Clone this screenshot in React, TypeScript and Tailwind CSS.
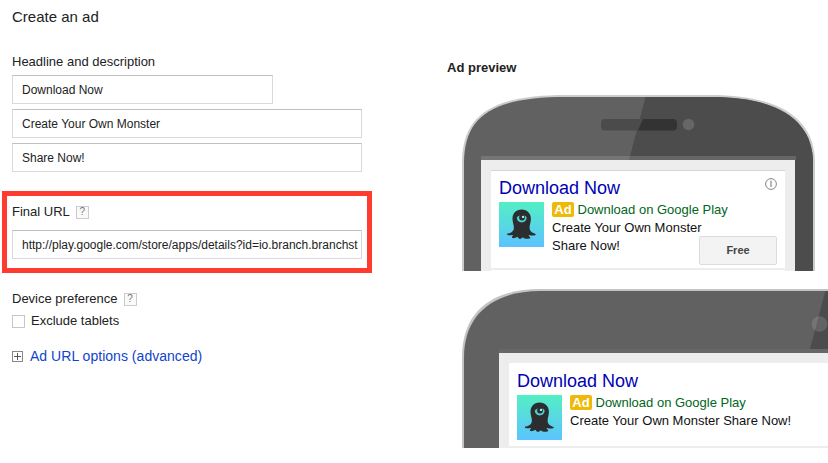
import type { ReactNode } from "react";

function Field({ children, className }: { children: ReactNode; className: string }) {
  return (
    <div
      className={`flex h-[29px] items-center border border-[#d9d9d9] border-t-[#c0c0c0] bg-white px-[9px] text-[12px] text-[#222] ${className}`}
    >
      <div className="w-full whitespace-nowrap">{children}</div>
    </div>
  );
}

function Help() {
  return (
    <span className="flex h-[13px] w-[13px] items-center justify-center border border-[#ccc] bg-[#fafafa] text-[10px] leading-none text-[#777]">
      ?
    </span>
  );
}

function Monster() {
  return (
    <svg width="45" height="45" viewBox="0 0 45 45" className="shrink-0">
      <defs>
        <linearGradient id="sky" x1="0" y1="0" x2="0" y2="1">
          <stop offset="0" stopColor="#53efc4" />
          <stop offset="1" stopColor="#5cc3ff" />
        </linearGradient>
      </defs>
      <rect width="45" height="45" fill="url(#sky)" />
      <path
        d="M22.6 7.500C17 7.500 13.300 11.600 13.500 17.200C13.600 20.500 15 23 14.900 26C14.700 29.500 11.500 31.300 8.300 31.600C7.400 32.300 8 33.200 9.200 33.300C11.200 33.500 13 33.200 14.200 32.900C13.600 33.800 12.800 34.700 12.900 35.600C13.600 36.900 16.600 36.100 18.500 34.800C19 36.400 20.400 37.100 21.700 36.700C22.800 36.400 23.100 35.700 23.700 35.200C25.200 36.600 27.800 37.200 30.400 36.500C31.900 36 31.300 35 30.200 34.200C29.600 33.700 29.600 33.200 30 32.900C31.800 33.600 34.700 34 36.500 33C37.400 32.200 36 31.700 34.800 31.200C31.800 30 30.600 28.200 30.600 25.400C30.600 22.600 31.900 20.300 31.900 16.700C31.900 11.600 28.200 7.500 22.600 7.500Z"
        fill="#2b2d2f"
      />
      <path d="M17.800 15.800C18.800 12.500 26.600 12.300 27.600 15.500C27.500 22 18 22 17.800 15.800Z" fill="#4fd0cf" />
      <circle cx="23" cy="15.600" r="2.900" fill="#2b2d2f" />
      <circle cx="24" cy="14.900" r="1.200" fill="#a5efe8" />
    </svg>
  );
}

function InfoIcon() {
  return (
    <svg width="12" height="12" viewBox="0 0 12 12">
      <circle cx="6" cy="6" r="5.4" fill="none" stroke="#777" strokeWidth="0.9" />
      <path d="M6 2.500V9" stroke="#8c8580" strokeWidth="1.200" />
    </svg>
  );
}

function AdText({ children }: { children: ReactNode }) {
  return (
    <div className="flex gap-2">
      <Monster />
      <div className="text-[13px] leading-[18px] text-[#111] whitespace-nowrap">
        <div className="flex h-[17px] items-start gap-1">
          <span className="flex h-[15px] w-[22px] items-center justify-center rounded-[2px] bg-[#efb90a] text-[13px] font-bold text-white">
            Ad
          </span>
          <span className="-ml-[0.5px] leading-[16px] text-[#006621]">Download on Google Play</span>
        </div>
        {children}
      </div>
    </div>
  );
}

function PhoneFrame() {
  return (
    <svg width="354" height="176" viewBox="0 0 354 176" className="[grid-area:1/1]">
      <defs>
        <clipPath id="phoneBody">
          <path d="M2 176V68C2 20 32 2 104 2H249C320 2 351 28 351 68V176Z" />
        </clipPath>
      </defs>
      <path d="M0 176V68C0 19 31 0 104 0H249C321 0 353 26 353 68V176Z" fill="#cbcdcc" />
      <g clipPath="url(#phoneBody)">
        <rect width="354" height="176" fill="#616161" />
        <path d="M184 0H354V176H150L167 65Z" fill="#4c4c4c" />
      </g>
      <rect x="139" y="24" width="76" height="11.500" rx="4" fill="#4b4b4b" />
      <path d="M181 24H211Q215 24 215 28V31.500Q215 35.500 211 35.500H176Z" fill="#333" />
      <circle cx="226.500" cy="29.500" r="5.800" fill="#666" />
      <path d="M19 61H334V65H19Z" fill="#757575" />
      <path d="M168 61H334V65H167Z" fill="#666" />
    </svg>
  );
}

function TabletFrame() {
  return (
    <svg width="366" height="159" viewBox="0 0 366 159" className="[grid-area:1/1]">
      <path d="M0 159V68C0 22 31 0 78 0H366V159Z" fill="#c3c5c4" />
      <path d="M2 159V68C2 25 32 2 78 2H366V159H2Z" fill="#616161" />
      <path d="M363.300 2H366V60H348Z" fill="#4c4c4c" />
      <circle cx="357.500" cy="35" r="7.800" fill="#fff" fillOpacity="0.130" />
      <rect x="37" y="60" width="329" height="4" fill="#676767" />
    </svg>
  );
}

export default function App() {
  return (
    <div className="flex h-[463px] w-[828px] overflow-hidden bg-white font-['Liberation_Sans',Arial,sans-serif] text-[13px] text-[#222]">
      <section className="w-[447px] shrink-0">
        <h1 className="mt-2 ml-3 text-[15px] leading-[18px]">Create an ad</h1>
        <h2 className="mt-7 ml-3 text-[13px] leading-4">Headline and description</h2>
        <div className="mt-[5px] ml-3 flex flex-col gap-[5px]">
          <Field className="w-[261px]">Download Now</Field>
          <Field className="w-[350px]">Create Your Own Monster</Field>
          <Field className="w-[350px]">Share Now!</Field>
        </div>
        <div className="mt-[19px] ml-[2px] h-[82px] w-[370px] border-[5px] border-[#ff3b2f] pt-2 pl-[5px]">
          <div className="flex h-4 items-center gap-[6px]">
            <span>Final URL</span>
            <Help />
          </div>
          <Field className="mt-[10px] w-[350px] pr-1">
            http://play.google.com/store/apps/details?id=io.branch.branchst
          </Field>
        </div>
        <div className="mt-[18px] ml-3 flex h-4 items-center gap-[6px]">
          <span>Device preference</span>
          <Help />
        </div>
        <label className="mt-[6px] ml-3 flex h-4 items-center gap-[6px]">
          <span className="h-[13px] w-[13px] border border-[#c6c6c6] bg-white" />
          <span>Exclude tablets</span>
        </label>
        <div className="mt-[18px] ml-3 flex h-[18px] items-center gap-[7px] text-[14px] tracking-[0.03px] text-[#1144cc]">
          <svg width="11" height="11" viewBox="0 0 11 11" className="shrink-0">
            <rect x="0.5" y="0.5" width="10" height="10" fill="#fff" stroke="#888" />
            <path d="M2 5.500H9M5.500 2V9" stroke="#555" />
          </svg>
          <span>Ad URL options (advanced)</span>
        </div>
      </section>

      <section className="w-[381px] shrink-0">
        <h2 className="mt-[60px] text-[13px] leading-4 font-bold">Ad preview</h2>
        <div className="mt-[19px] ml-[15px] grid h-[176px] w-[354px]">
          <PhoneFrame />
          <div className="z-10 mt-[65px] ml-[19px] h-[111px] w-[314px] bg-[#ededed] pt-[10px] pl-[10px] [grid-area:1/1]">
            <div className="flex h-[98px] w-[294px] justify-between border-t border-[#d5d5d5] bg-white pt-[7px] pl-2">
              <div className="w-[200px]">
                <div className="mb-1 text-[18px] leading-5 whitespace-nowrap text-[#0000b5]">Download Now</div>
                <AdText>
                  <div>Create Your Own Monster</div>
                  <div>Share Now!</div>
                </AdText>
              </div>
              <div className="flex w-[86px] flex-col items-end justify-between pr-2 pb-[3px]">
                <InfoIcon />
                <button className="h-[29px] w-[78px] rounded-[2px] border border-[#dcdcdc] bg-[#f3f3f3] text-[11px] font-bold text-[#444]">
                  Free
                </button>
              </div>
            </div>
            <div className="mt-[2px] h-px w-[294px] bg-white" />
          </div>
        </div>
        <div className="mt-[18px] ml-[15px] grid h-[159px] w-[366px]">
          <TabletFrame />
          <div className="z-10 mt-[64px] ml-[37px] h-[95px] w-[329px] bg-[#ededed] pt-[10px] pl-[10px] [grid-area:1/1]">
            <div className="h-[83px] w-[319px] bg-white pt-2 pl-2">
              <div className="mb-1 text-[18px] leading-5 text-[#0000b5]">Download Now</div>
              <AdText>
                <div>Create Your Own Monster Share Now!</div>
              </AdText>
            </div>
          </div>
        </div>
      </section>
    </div>
  );
}
